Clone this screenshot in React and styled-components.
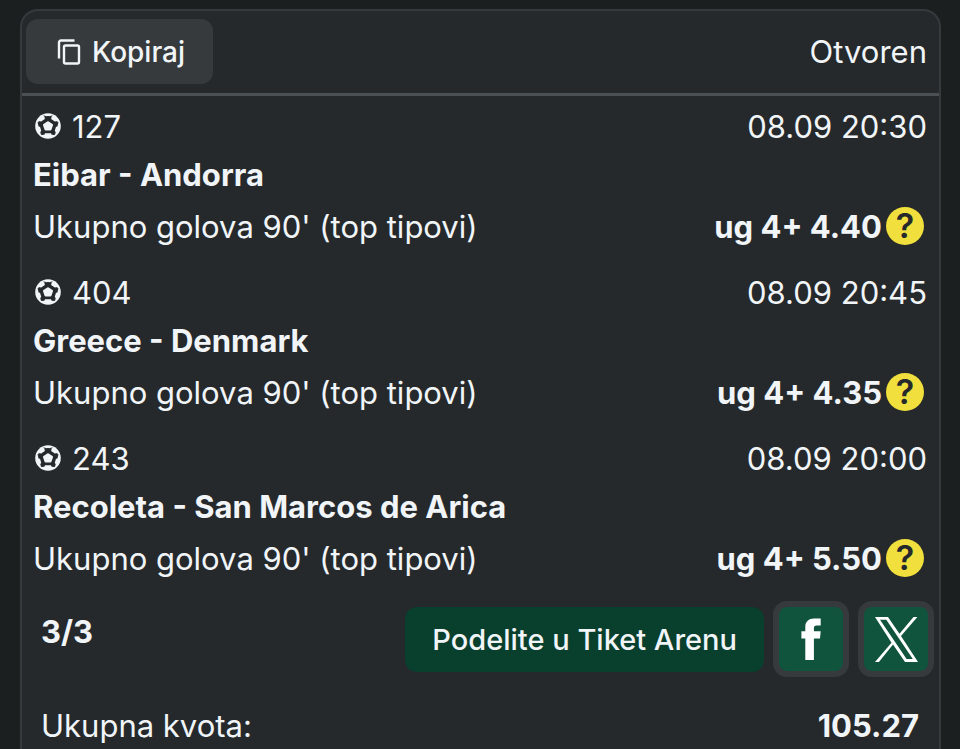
import React from "react";
import styled, { createGlobalStyle } from "styled-components";

const matches = [
  {
    code: "127",
    time: "08.09 20:30",
    teams: "Eibar - Andorra",
    market: "Ukupno golova 90' (top tipovi)",
    pick: "ug 4+",
    odds: "4.40",
  },
  {
    code: "404",
    time: "08.09 20:45",
    teams: "Greece - Denmark",
    market: "Ukupno golova 90' (top tipovi)",
    pick: "ug 4+",
    odds: "4.35",
  },
  {
    code: "243",
    time: "08.09 20:00",
    teams: "Recoleta - San Marcos de Arica",
    market: "Ukupno golova 90' (top tipovi)",
    pick: "ug 4+",
    odds: "5.50",
  },
];

function CopyIcon() {
  return (
    <svg width="24" height="28" viewBox="0 0 24 28" fill="none" stroke="#f1f5f8" strokeWidth="2.4" aria-hidden="true">
      <path d="M2 20.5V4.5a2 2 0 0 1 2-2h13.5" />
      <rect x="7" y="7.5" width="15" height="18" rx="1.5" />
    </svg>
  );
}

function BallIcon() {
  return (
    <svg width="26" height="26" viewBox="0 0 26 26" aria-hidden="true">
      <circle cx="13" cy="13" r="12.8" fill="#f1f5f8" />
      <path
        d="M13 3.2l4.4 3.4 5.6 2.8-1.8 6.2-1.6 6-6.6-1-6.6 1-1.6-6L3 9.4l5.6-2.8z"
        fill="#25292c"
        stroke="#25292c"
        strokeWidth="1"
        strokeLinejoin="round"
      />
      <path d="M8.4 2.2l4.6 1.6 4.6-1.6-1 3.2H9.4z" fill="#25292c" />
      <path
        d="M13 9.4l3.8 2.7-1.5 4.3h-4.6l-1.5-4.3z"
        fill="#f1f5f8"
        stroke="#f1f5f8"
        strokeWidth="2.4"
        strokeLinejoin="round"
      />
      <path d="M5.4 4.4l3.8-1.6.6 3.2-3.6 2.4-3.4-.6z" fill="#f1f5f8" />
      <path d="M20.6 4.4l-3.8-1.6-.6 3.2 3.6 2.4 3.4-.6z" fill="#f1f5f8" />
      <path d="M1.6 14l3.4-.2 1.2 4-1.6 2.4z" fill="#f1f5f8" />
      <path d="M24.4 14l-3.4-.2-1.2 4 1.6 2.4z" fill="#f1f5f8" />
      <path d="M10 20.2h6l1.4 3.8H8.6z" fill="#f1f5f8" />
    </svg>
  );
}

function FacebookIcon() {
  return (
    <svg width="20" height="42" viewBox="0 0 20 42" fill="#fff" aria-hidden="true">
      <path d="M4.3 42V20.5H.4v-7.3h3.9V9.1C4.3 3.6 7.8.6 13.1.6h6.6v6.8h-4c-2 0-2.8.9-2.8 2.8v3h6.8l-.7 7.3h-6.1V42z" />
    </svg>
  );
}

function XIcon() {
  return (
    <svg width="43" height="45" viewBox="0 0 43 45" aria-hidden="true">
      <path
        fill="#fff"
        fillRule="evenodd"
        d="M0 0h13l11.5 16.7L38.5 0h3.9L26 18.9 43 45H30L18 27.5 3.9 45H0l16.5-19.3zM5 2.8l26.6 39.2h6.2L11.3 2.8z"
      />
    </svg>
  );
}

export default function App() {
  return (
    <>
      <GlobalStyle />
      <Ticket>
        <Header>
          <CopyButton type="button">
            <CopyIcon />
            Kopiraj
          </CopyButton>
          <span>Otvoren</span>
        </Header>
        <Matches>
          {matches.map((match) => (
            <Match key={match.code}>
              <Row $height={48}>
                <Code>
                  <BallIcon />
                  {match.code}
                </Code>
                <time>{match.time}</time>
              </Row>
              <Teams>{match.teams}</Teams>
              <Row $height={52}>
                <span>{match.market}</span>
                <Pick>
                  {match.pick} {match.odds}
                  <Pending type="button" aria-label="Status">
                    ?
                  </Pending>
                </Pick>
              </Row>
            </Match>
          ))}
        </Matches>
        <Share>
          <Count>3/3</Count>
          <ShareButton type="button">Podelite u Tiket Arenu</ShareButton>
          <Social href="#" aria-label="Facebook">
            <FacebookIcon />
          </Social>
          <Social href="#" aria-label="X">
            <XIcon />
          </Social>
        </Share>
        <Total>
          <span>Ukupna kvota:</span>
          <strong>105.27</strong>
        </Total>
      </Ticket>
    </>
  );
}

const GlobalStyle = createGlobalStyle`
  * {
    box-sizing: border-box;
  }
  body {
    margin: 0;
    background: #1b1f20;
    color: #f1f5f8;
    font-family: Inter, "Liberation Sans", sans-serif;
    font-size: 31px;
    overflow: hidden;
  }
  button {
    border: none;
    color: inherit;
    font-family: inherit;
    cursor: pointer;
  }
  svg {
    display: block;
    flex-shrink: 0;
  }
`;

const Ticket = styled.main`
  margin: 9px 19px 0 20px;
  min-height: 100vh;
  background: #25292c;
  border: 2px solid #363a3d;
  border-radius: 18px;
`;

const Header = styled.header`
  display: flex;
  align-items: center;
  justify-content: space-between;
  padding: 8px 12px 9px 4px;
  border-bottom: 3px solid #4b5054;
`;

const CopyButton = styled.button`
  display: flex;
  align-items: center;
  gap: 11px;
  height: 65px;
  padding: 0 28px 0 31px;
  background: #363a3d;
  border-radius: 12px;
  font-size: 28px;
  font-weight: 500;
`;

const Matches = styled.section`
  display: flex;
  flex-direction: column;
  gap: 16px;
  padding: 6px 12px 17px 11px;
`;

const Match = styled.article`
  display: flex;
  flex-direction: column;
`;

const Row = styled.div`
  display: flex;
  align-items: center;
  justify-content: space-between;
  height: ${({ $height }) => $height}px;
`;

const Code = styled.span`
  display: flex;
  align-items: center;
  gap: 11px;
  padding-left: 2px;
`;

const Teams = styled.h2`
  margin: 0;
  font-size: 31px;
  font-weight: 700;
  line-height: 50px;
`;

const Pick = styled.span`
  display: flex;
  align-items: center;
  gap: 4px;
  padding-right: 3px;
  font-weight: 700;
  white-space: pre;
`;

const Pending = styled.button`
  width: 38px;
  height: 38px;
  padding: 0;
  background: #f0df3c;
  border-radius: 50%;
  color: #25292c;
  font-size: 34px;
  font-weight: 600;
  line-height: 38px;
`;

const Share = styled.section`
  display: flex;
  align-items: center;
  gap: 9px;
  padding: 0 5px 0 19px;
`;

const Count = styled.strong`
  align-self: flex-start;
  margin-right: auto;
  line-height: 62px;
`;

const ShareButton = styled.button`
  height: 65px;
  padding: 0 27px;
  background: #093f2d;
  border-radius: 12px;
  font-size: 29px;
  font-weight: 500;
`;

const Social = styled.a`
  display: flex;
  align-items: center;
  justify-content: center;
  width: 76px;
  height: 76px;
  background: #11543e;
  border: 6px solid #363a3d;
  border-radius: 14px;
`;

const Total = styled.footer`
  display: flex;
  align-items: center;
  justify-content: space-between;
  padding: 29px 20px 20px 19px;
  line-height: 40px;
`;
